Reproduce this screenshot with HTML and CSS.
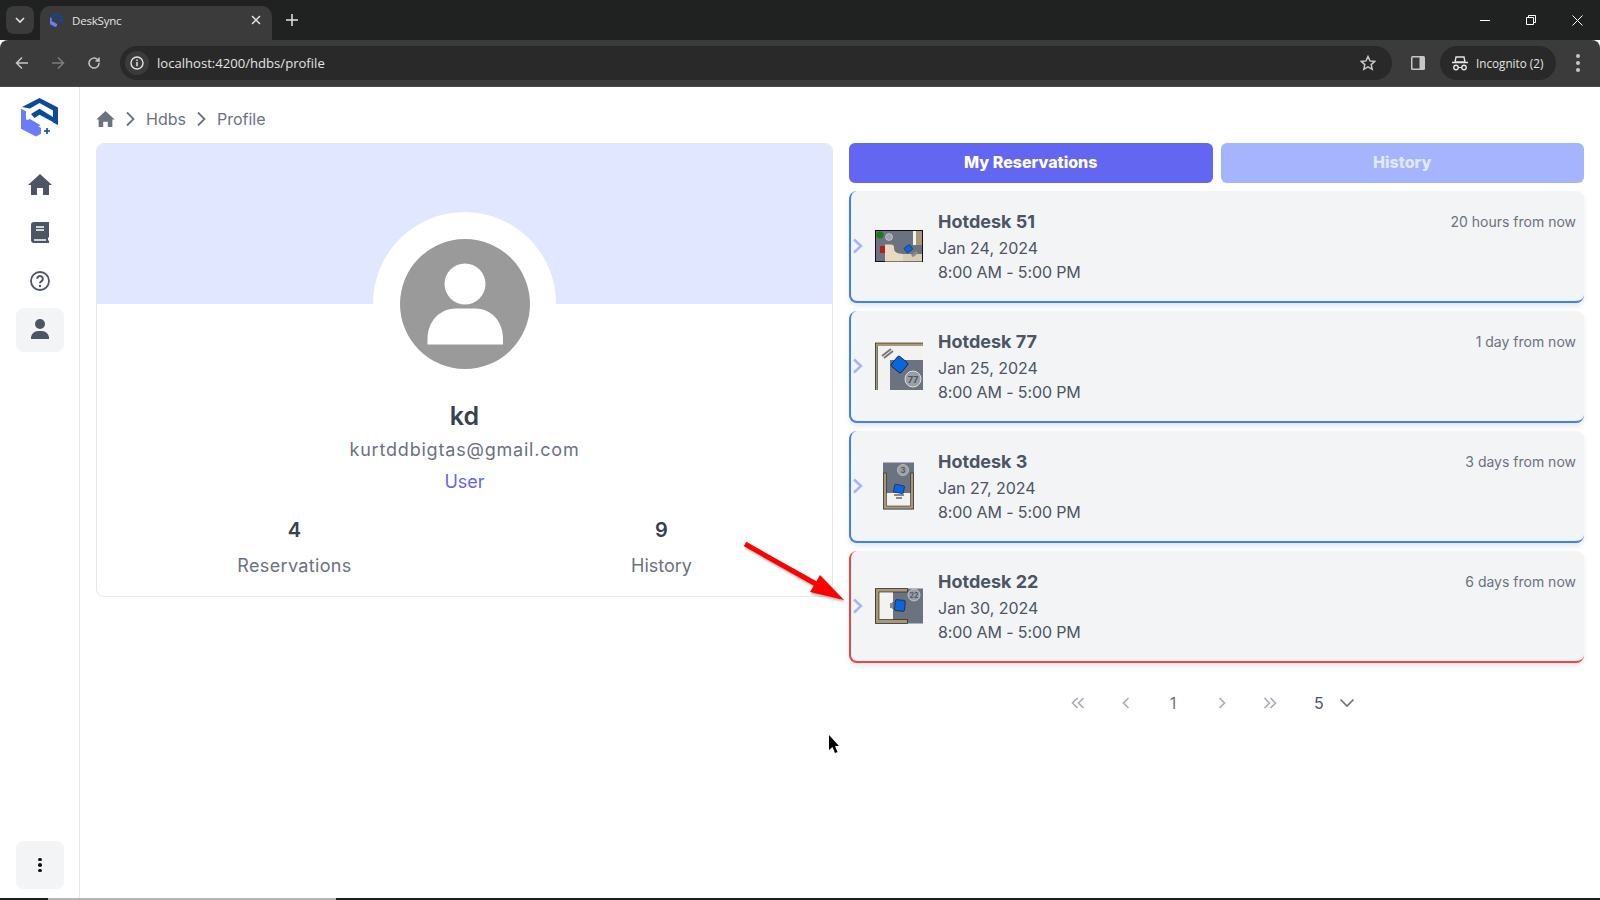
FILE: index.html
```html
<!DOCTYPE html>
<html lang="en">
<head>
    <meta charset="UTF-8">
    <title>DeskSync</title>
    <link rel="stylesheet" href="styles.css">
</head>
<body>
    <div class="tabstrip">
        <div class="tab-search">
            <svg width="12" height="12" viewBox="0 0 12 12"><path d="M2 4l4 4 4-4" fill="none" stroke="#e3e3e3" stroke-width="1.6"/></svg>
        </div>
        <div class="tab">
            <svg class="favicon" width="14" height="15" viewBox="0 0 40 40">
                <path d="M21.500 0L40 9.500V27l-5-2.500v-12L21.500 5 12 10.500 4 9z" fill="#0b4a9c"/>
                <path d="M13 16l8.500-5.300L35 19v5l-13.500-7.300-5 3.300z" fill="#0b4a9c"/>
                <path d="M3 10.700l5 2.600v8L23 30v5.700L18 38.500 3 30.700z" fill="#6a7cf8"/>
            </svg>
            <span class="tab-title">DeskSync</span>
            <svg class="tab-close" width="10" height="10" viewBox="0 0 10 10"><path d="M1 1l8 8M9 1l-8 8" stroke="#e3e3e3" stroke-width="1.5"/></svg>
        </div>
        <svg class="tab-new" width="12" height="12" viewBox="0 0 12 12"><path d="M6 0v12M0 6h12" stroke="#e3e3e3" stroke-width="1.5"/></svg>
        <div class="window-btns">
            <svg width="10" height="10" viewBox="0 0 10 10"><path d="M0 5.500h10" stroke="#fff"/></svg>
            <svg width="10" height="10" viewBox="0 0 10 10"><path d="M.5 2.500h7v7h-7zM2.500 2.500v-2h7v7h-2" fill="none" stroke="#fff"/></svg>
            <svg width="11" height="11" viewBox="0 0 11 11"><path d="M.5.5l10 10M10.500.5l-10 10" stroke="#fff"/></svg>
        </div>
    </div>
    <div class="toolbar">
        <div class="nav-btns">
            <svg width="14" height="14" viewBox="0 0 14 14"><path d="M13 7H2M7 1.500L1.500 7 7 12.500" fill="none" stroke="#c7c7c7" stroke-width="1.500"/></svg>
            <svg width="14" height="14" viewBox="0 0 14 14"><path d="M1 7h11M7 1.500L12.500 7 7 12.500" fill="none" stroke="#7d7d7d" stroke-width="1.500"/></svg>
            <svg width="14" height="14" viewBox="0 0 14 14"><path d="M12 7a5 5 0 1 1-1.500-3.500L12 5V1.500M12 5H8.500" fill="none" stroke="#c7c7c7" stroke-width="1.500"/></svg>
        </div>
        <div class="omnibox">
            <span class="site-info">
                <svg width="14" height="14" viewBox="0 0 14 14"><circle cx="7" cy="7" r="6" fill="none" stroke="#e3e3e3" stroke-width="1.400"/><path d="M7 6v4.200M7 3.500v1.500" stroke="#e3e3e3" stroke-width="1.500"/></svg>
            </span>
            <span class="url">localhost:4200/hdbs/profile</span>
            <svg class="star" width="16" height="16" viewBox="0 0 16 16"><path d="M8 1.500l2 4.400 4.700.5-3.500 3.200 1 4.700L8 11.900l-4.200 2.400 1-4.700L1.300 6.400 6 5.900z" fill="none" stroke="#c7c7c7" stroke-width="1.500"/></svg>
        </div>
        <svg class="side-panel" width="14" height="14" viewBox="0 0 14 14"><rect width="14" height="14" rx="1.500" fill="#c7c7c7"/><rect x="1.500" y="1.500" width="7" height="11" fill="#3b3b3b"/></svg>
        <div class="incognito">
            <svg width="16" height="15" viewBox="0 0 16 15"><path d="M4 1h8l1 5H3zM0 6.500h16" fill="none" stroke="#e3e3e3" stroke-width="1.400"/><circle cx="4" cy="11.500" r="2.200" fill="none" stroke="#e3e3e3" stroke-width="1.400"/><circle cx="12" cy="11.500" r="2.200" fill="none" stroke="#e3e3e3" stroke-width="1.400"/><path d="M6 11.500h4" stroke="#e3e3e3"/></svg>
            <span>Incognito (2)</span>
        </div>
        <div class="chrome-menu"><i></i><i></i><i></i></div>
    </div>

    <div class="app">
        <aside class="sidebar">
            <svg class="logo" width="40" height="40" viewBox="0 0 40 40">
                <path d="M21.500 0L40 9.500V27l-5-2.500v-12L21.500 5 12 10.500 4 9z" fill="#0b4a9c"/>
                <path d="M13 16l8.500-5.300L35 19v5l-13.500-7.300-5 3.300z" fill="#0b4a9c"/>
                <path d="M3 10.700l5 2.600v8L23 30v5.700L18 38.500 3 30.700z" fill="#6a7cf8"/>
                <path d="M11.500 20.700L22.500 27.300 20 29 9 23z" fill="#6a7cf8"/>
                <path d="M26 33h6M29 30v6" stroke="#0b4a9c" stroke-width="1.600"/>
            </svg>
            <nav class="side-nav">
                <a class="side-link">
                    <svg width="24" height="21" viewBox="0 0 24 21"><path d="M12 0L24 11h-3v10h-6v-7H9v7H3V11H0z" fill="#4b5563"/></svg>
                </a>
                <a class="side-link">
                    <svg width="18" height="21" viewBox="0 0 18 21"><path d="M3 0h15v15l-1 1v2l1 1v2H3a3 3 0 0 1-3-3V3a3 3 0 0 1 3-3z" fill="#4b5563"/><path d="M5 5h8M5 8h8M3 18h12" stroke="#fff" stroke-width="1.600"/></svg>
                </a>
                <a class="side-link">
                    <svg width="20" height="20" viewBox="0 0 20 20"><circle cx="10" cy="10" r="9" fill="none" stroke="#4b5563" stroke-width="1.800"/><path d="M7.200 7.800a2.800 2.800 0 1 1 4.400 2.300c-1 .7-1.600 1.200-1.600 2.200" fill="none" stroke="#4b5563" stroke-width="2"/><circle cx="10" cy="15" r="1.200" fill="#4b5563"/></svg>
                </a>
                <a class="side-link active">
                    <svg width="18" height="21" viewBox="0 0 18 21"><circle cx="9" cy="5" r="5" fill="#4b5563"/><path d="M0 20v-2a7 7 0 0 1 7-6h4a7 7 0 0 1 7 6v2z" fill="#4b5563"/></svg>
                </a>
            </nav>
            <button class="side-more"><i></i><i></i><i></i></button>
        </aside>

        <main class="content">
            <div class="breadcrumb">
                <svg width="19" height="16" viewBox="0 0 24 21"><path d="M12 0L24 11h-3v10h-6v-7H9v7H3V11H0z" fill="#6b7280"/></svg>
                <svg class="crumb-sep" width="10" height="16" viewBox="0 0 10 16"><path d="M2 1.500L8.500 8 2 14.500" fill="none" stroke="#6b7280" stroke-width="1.800"/></svg>
                <span>Hdbs</span>
                <svg class="crumb-sep" width="10" height="16" viewBox="0 0 10 16"><path d="M2 1.500L8.500 8 2 14.500" fill="none" stroke="#6b7280" stroke-width="1.800"/></svg>
                <span>Profile</span>
            </div>

            <div class="columns">
                <section class="profile-card">
                    <div class="banner"></div>
                    <div class="avatar-ring">
                        <svg width="130" height="130" viewBox="0 0 130 130">
                            <circle cx="65" cy="65" r="65" fill="#9a9a9a"/>
                            <circle cx="65" cy="45" r="20.500" fill="#fff"/>
                            <path d="M27.500 105.500V100C27.500 82 40 69.500 56 69.500H75C91 69.500 103 82 103 100V105.500Z" fill="#fff"/>
                        </svg>
                    </div>
                    <div class="profile-info">
                        <h2 class="profile-name">kd</h2>
                        <div class="profile-email">kurtddbigtas@gmail.com</div>
                        <div class="profile-role">User</div>
                        <div class="stats">
                            <div class="stat">
                                <strong>4</strong>
                                <span class="stat-wide">Reservations</span>
                            </div>
                            <div class="stat">
                                <strong>9</strong>
                                <span>History</span>
                            </div>
                        </div>
                    </div>
                </section>

                <section class="reservations">
                    <div class="res-tabs">
                        <button class="res-tab selected">My Reservations</button>
                        <button class="res-tab">History</button>
                    </div>

                    <div class="res-card">
                        <svg class="res-chevron" width="11" height="16" viewBox="0 0 11 16"><path d="M2 1.500L9 8l-7 6.500" fill="none" stroke="#a5b4fc" stroke-width="2.400"/></svg>
                        <svg class="thumb" width="48" height="48" viewBox="0 0 48 48">
                            <rect x="0.500" y="8.500" width="47" height="31" fill="#6b7280" stroke="#111"/>
                            <path d="M10 22.500h6q3 0 3 3v1q0 5 9 5.500v7.500H10z" fill="#e8d9c0"/>
                            <rect x="28" y="32" width="19" height="7.500" fill="#d8cdb8"/>
                            <rect x="38" y="9" width="3" height="14" fill="#f2f2f0"/>
                            <rect x="41" y="9" width="6" height="14" fill="#a89878"/>
                            <circle cx="5" cy="13" r="3.500" fill="#1a7a1a"/>
                            <circle cx="14" cy="15" r="3.500" fill="#a0a4ab" stroke="#ddd" stroke-width=".6"/>
                            <rect x="5" y="24" width="5" height="7" fill="#b81c1c"/>
                            <rect x="30" y="24" width="7" height="6" rx="1" fill="#0a66e0" stroke="#111" stroke-width=".4" transform="rotate(-35 33 27)"/>
                            <path d="M37 34l5-4" stroke="#888" stroke-width="3"/>
                        </svg>
                        <div class="res-body">
                            <h3>Hotdesk 51</h3>
                            <div>Jan 24, 2024</div>
                            <div class="res-time">8:00 AM - 5:00 PM</div>
                        </div>
                        <span class="res-when">20 hours from now</span>
                    </div>

                    <div class="res-card">
                        <svg class="res-chevron" width="11" height="16" viewBox="0 0 11 16"><path d="M2 1.500L9 8l-7 6.500" fill="none" stroke="#a5b4fc" stroke-width="2.400"/></svg>
                        <svg class="thumb" width="48" height="48" viewBox="0 0 48 48">
                            <rect x="0" y="1" width="48" height="47" fill="#6b7280"/>
                            <path d="M3 4h45v14H15v30H3z" fill="#f2f2f0"/>
                            <path d="M0 1h48v3H2v44H0z" fill="#a89878"/>
                            <path d="M0 1h48M.5 1v47" stroke="#111" stroke-width=".6"/>
                            <rect x="18" y="16" width="13" height="13" rx="2" fill="#0a66e0" stroke="#111" stroke-width=".7" transform="rotate(40 24.500 22.500)"/>
                            <path d="M7 14l9-7M9 16l9-7" stroke="#777" stroke-width="2"/>
                            <circle cx="38" cy="37" r="8" fill="#9a9ea5" stroke="#ddd"/>
                            <text x="38" y="41" class="thumb-num">77</text>
                        </svg>
                        <div class="res-body">
                            <h3>Hotdesk 77</h3>
                            <div>Jan 25, 2024</div>
                            <div class="res-time">8:00 AM - 5:00 PM</div>
                        </div>
                        <span class="res-when">1 day from now</span>
                    </div>

                    <div class="res-card">
                        <svg class="res-chevron" width="11" height="16" viewBox="0 0 11 16"><path d="M2 1.500L9 8l-7 6.500" fill="none" stroke="#a5b4fc" stroke-width="2.400"/></svg>
                        <svg class="thumb" width="48" height="48" viewBox="0 0 48 48">
                            <rect x="8" y="0.500" width="31" height="47" fill="#6b7280"/>
                            <rect x="11" y="31" width="25" height="13" fill="#f2f2f0"/>
                            <path d="M8.500 11v36h30V11h-3v33h-24V11z" fill="#a89878" stroke="#111" stroke-width=".5"/>
                            <rect x="19" y="23" width="10" height="8" rx="1" fill="#0a66e0" stroke="#111" stroke-width=".5" transform="rotate(12 24 27)"/>
                            <path d="M19 33h10M21 36h6" stroke="#666" stroke-width="1.500"/>
                            <circle cx="28" cy="8" r="5.500" fill="#9a9ea5" stroke="#ddd" stroke-width=".6"/>
                            <text x="28" y="10.500" class="thumb-num small">3</text>
                        </svg>
                        <div class="res-body">
                            <h3>Hotdesk 3</h3>
                            <div>Jan 27, 2024</div>
                            <div class="res-time">8:00 AM - 5:00 PM</div>
                        </div>
                        <span class="res-when">3 days from now</span>
                    </div>

                    <div class="res-card alert">
                        <svg class="res-chevron" width="11" height="16" viewBox="0 0 11 16"><path d="M2 1.500L9 8l-7 6.500" fill="none" stroke="#a5b4fc" stroke-width="2.400"/></svg>
                        <svg class="thumb" width="48" height="48" viewBox="0 0 48 48">
                            <rect x="0" y="6.500" width="48" height="35" fill="#6b7280"/>
                            <rect x="4" y="10" width="14" height="28" fill="#f2f2f0"/>
                            <path d="M.500 6.500h32v3.500H4v27.500h28.500v4H.500z" fill="#a89878" stroke="#111" stroke-width=".6"/>
                            <rect x="20" y="18" width="10" height="11" rx="1.500" fill="#0a66e0" stroke="#111" stroke-width=".6" transform="rotate(6 25 23)"/>
                            <path d="M18 20v7M16 21v5" stroke="#666" stroke-width="1.500"/>
                            <circle cx="39" cy="13" r="6" fill="#9a9ea5" stroke="#ddd" stroke-width=".6"/>
                            <text x="39" y="15.500" class="thumb-num small">22</text>
                        </svg>
                        <div class="res-body">
                            <h3>Hotdesk 22</h3>
                            <div>Jan 30, 2024</div>
                            <div class="res-time">8:00 AM - 5:00 PM</div>
                        </div>
                        <span class="res-when">6 days from now</span>
                    </div>

                    <div class="pager">
                        <svg width="14" height="12" viewBox="0 0 14 12"><path d="M6.500 1l-5 5 5 5M12.500 1l-5 5 5 5" fill="none" stroke="#a9adb5" stroke-width="1.700"/></svg>
                        <svg width="14" height="12" viewBox="0 0 14 12"><path d="M9.500 1l-5 5 5 5" fill="none" stroke="#a9adb5" stroke-width="1.700"/></svg>
                        <span class="page-num">1</span>
                        <svg width="14" height="12" viewBox="0 0 14 12"><path d="M4.500 1l5 5-5 5" fill="none" stroke="#a9adb5" stroke-width="1.700"/></svg>
                        <svg width="14" height="12" viewBox="0 0 14 12"><path d="M1.500 1l5 5-5 5M7.500 1l5 5-5 5" fill="none" stroke="#a9adb5" stroke-width="1.700"/></svg>
                        <span class="page-size">5
                            <svg width="16" height="10" viewBox="0 0 16 10"><path d="M1.500 1.500L8 8l6.500-6.500" fill="none" stroke="#6b7280" stroke-width="1.700"/></svg>
                        </span>
                    </div>
                </section>
            </div>
        </main>
    </div>
    <div class="taskbar"><span></span></div>

    <svg class="red-arrow" width="110" height="70" viewBox="0 0 110 70">
        <path d="M1 3L72 43" stroke="#ff0000" stroke-width="5"/>
        <path d="M76 34L100 59 66 51Z" fill="#ff0000"/>
    </svg>
    <svg class="cursor" width="12" height="20" viewBox="0 0 12 20"><path d="M1 0v15l3.500-3 2.500 6 2.500-1-2.500-6H11z" fill="#000"/></svg>
</body>
</html>
```

FILE: styles.css
```css
* {
    box-sizing: border-box;
}
html, body {
    margin: 0;
    height: 100%;
}
body {
    width: 1600px;
    height: 900px;
    overflow: hidden;
    display: flex;
    flex-direction: column;
    position: relative;
    font-family: Inter, "Liberation Sans", sans-serif;
    color: #4b5563;
    background: #fff;
}

/* browser chrome */
.tabstrip {
    height: 40px;
    flex: none;
    display: flex;
    align-items: center;
    background: #202221;
    padding-left: 6px;
}
.tab-search {
    width: 28px;
    height: 28px;
    border-radius: 8px;
    background: #3b3b3b;
    display: flex;
    align-items: center;
    justify-content: center;
}
.tab {
    width: 232px;
    height: 34px;
    margin-top: 6px;
    margin-left: 6px;
    background: #3b3b3b;
    border-radius: 10px 10px 0 0;
    display: flex;
    align-items: center;
    padding: 0 11px 6px 9px;
}
.tab-title {
    margin-left: 9px;
    flex: 1;
    font-size: 11.500px;
    letter-spacing: -.2px;
    color: #e3e3e3;
    font-family: "Open Sans", sans-serif;
}
.tab-new {
    margin-left: 14px;
}
.window-btns {
    margin-left: auto;
    display: flex;
    align-items: center;
    gap: 36px;
    padding-right: 17px;
}
.toolbar {
    height: 47px;
    flex: none;
    display: flex;
    align-items: center;
    background: #3b3b3b;
    border-radius: 8px 8px 0 0;
    border-bottom: 1px solid #4a4a4a;
}
.nav-btns {
    display: flex;
    gap: 22px;
    padding-left: 15px;
}
.omnibox {
    width: 1272px;
    height: 34px;
    margin-left: 19px;
    border-radius: 17px;
    background: #292929;
    display: flex;
    align-items: center;
    padding: 0 16px 0 5px;
}
.site-info {
    width: 24px;
    height: 24px;
    border-radius: 50%;
    background: #3b3b3b;
    display: flex;
    align-items: center;
    justify-content: center;
}
.url {
    margin-left: 8px;
    flex: 1;
    font-size: 13.100px;
    color: #e3e3e3;
    font-family: "Open Sans", sans-serif;
}
.side-panel {
    margin-left: 19px;
}
.incognito {
    width: 116px;
    height: 34px;
    margin-left: 15px;
    border-radius: 17px;
    background: #292929;
    display: flex;
    align-items: center;
    gap: 8px;
    padding-left: 12px;
    font-size: 11.700px;
    color: #e3e3e3;
    font-family: "Open Sans", sans-serif;
}
.chrome-menu {
    margin-left: 20px;
    display: flex;
    flex-direction: column;
    gap: 3px;
}
.chrome-menu i {
    width: 4px;
    height: 4px;
    border-radius: 50%;
    background: #c7c7c7;
}

/* app */
.app {
    flex: 1;
    min-height: 0;
    display: flex;
}
.sidebar {
    width: 80px;
    flex: none;
    border-right: 1px solid #e5e7eb;
    display: flex;
    flex-direction: column;
    align-items: center;
    padding: 11px 0 9px;
}
.logo {
    display: block;
    margin-left: -3px;
}
.side-nav {
    margin-top: 24px;
    display: flex;
    flex-direction: column;
    gap: 4.500px;
}
.side-link {
    width: 48px;
    height: 44px;
    border-radius: 8px;
    display: flex;
    align-items: center;
    justify-content: center;
}
.side-link.active {
    background: #f3f4f6;
}
.side-more {
    margin-top: auto;
    width: 48px;
    height: 48px;
    border: none;
    border-radius: 8px;
    background: #f3f4f6;
    display: flex;
    flex-direction: column;
    align-items: center;
    justify-content: center;
    gap: 2px;
}
.side-more i {
    width: 4px;
    height: 3.500px;
    border-radius: 50%;
    background: #111;
}
.content {
    flex: 1;
    min-width: 0;
    padding: 0 16px 0 16px;
}
.breadcrumb {
    height: 56px;
    padding-top: 7px;
    display: flex;
    align-items: center;
    font-size: 16px;
    color: #6b7280;
}
.crumb-sep {
    margin: 0 11px 0 10px;
}
.columns {
    display: flex;
    align-items: flex-start;
    gap: 16px;
}

/* profile */
.profile-card {
    width: 737px;
    height: 454px;
    flex: none;
    position: relative;
    border: 1px solid #e5e7eb;
    border-radius: 8px;
    overflow: hidden;
}
.banner {
    height: 160px;
    background: #e0e7ff;
}
.avatar-ring {
    position: absolute;
    left: 276px;
    top: 68px;
    width: 183px;
    height: 183px;
    border-radius: 50%;
    background: #fff;
    display: flex;
    align-items: center;
    justify-content: center;
}
.profile-info {
    padding-top: 96px;
    text-align: center;
}
.profile-name {
    margin: 0;
    font-size: 25px;
    line-height: 32px;
    font-weight: 600;
    color: #374151;
}
.profile-email {
    margin-top: 2px;
    font-size: 18px;
    line-height: 32px;
    letter-spacing: .8px;
    color: #6b7280;
}
.profile-role {
    font-size: 18px;
    line-height: 32px;
    color: #6366f1;
}
.stats {
    margin-top: 18px;
    margin-left: 14px;
    display: grid;
    grid-template-columns: 367px 367px;
}
.stat {
    display: flex;
    flex-direction: column;
    gap: 8px;
}
.stat strong {
    font-size: 20px;
    line-height: 28px;
    font-weight: 600;
    color: #374151;
}
.stat span {
    font-size: 18px;
    line-height: 28px;
    color: #6b7280;
}
.stat .stat-wide {
    letter-spacing: .35px;
}

/* reservations */
.reservations {
    flex: 1;
    min-width: 0;
    display: flex;
    flex-direction: column;
    gap: 8px;
}
.res-tabs {
    display: flex;
    gap: 8px;
}
.res-tab {
    flex: 1;
    height: 40px;
    border: none;
    border-radius: 6px;
    padding: 0 0 2px;
    background: #a5b4fc;
    color: #e0e7ff;
    font-family: inherit;
    font-size: 16px;
    font-weight: 800;
}
.res-tab.selected {
    background: #6366f1;
    color: #fff;
}
.res-card {
    height: 112px;
    display: flex;
    align-items: center;
    padding: 0 8px 0 1px;
    background: #f3f4f6;
    border: 0 solid #3b82f6;
    border-left-width: 2px;
    border-bottom-width: 2px;
    border-radius: 8px;
    box-shadow: 0 4px 6px -1px rgba(0, 0, 0, .1);
}
.res-card.alert {
    border-color: #ef4444;
}
.res-chevron {
    flex: none;
}
.thumb {
    flex: none;
    margin-left: 12px;
}
.res-body {
    margin-left: 15px;
    flex: 1;
    font-size: 16px;
    line-height: 24px;
    color: #4b5563;
}
.res-body h3 {
    margin: -1px 0 0;
    font-size: 18px;
    line-height: 28px;
    font-weight: 700;
}
.res-time {
    letter-spacing: -.12px;
}
.res-when {
    align-self: flex-start;
    margin-top: 21px;
    font-size: 14px;
    line-height: 20px;
    color: #6b7280;
}
.thumb-num {
    font-size: 9px;
    font-weight: 700;
    fill: #4b5563;
    text-anchor: middle;
}
.thumb-num.small {
    font-size: 7px;
}
.pager {
    margin-top: 8px;
    height: 48px;
    display: flex;
    align-items: center;
    padding-left: 222px;
    gap: 34px;
    font-size: 16px;
    color: #6b7280;
}
.page-num {
    width: 14px;
    margin-left: -1px;
    margin-right: 1px;
    text-align: center;
}
.page-size {
    margin-left: 3px;
    display: flex;
    align-items: center;
    gap: 15px;
    color: #4b5563;
}
.taskbar {
    height: 2px;
    flex: none;
    background: #202221;
    padding-left: 48px;
}
.taskbar span {
    display: block;
    width: 288px;
    height: 2px;
    background: #b5b5b5;
}

/* annotations on top of the screenshot */
.red-arrow {
    position: absolute;
    left: 744px;
    top: 541px;
    filter: drop-shadow(1px 2px 1px rgba(0, 0, 0, .3));
}
.cursor {
    position: absolute;
    left: 828px;
    top: 735px;
}
```
